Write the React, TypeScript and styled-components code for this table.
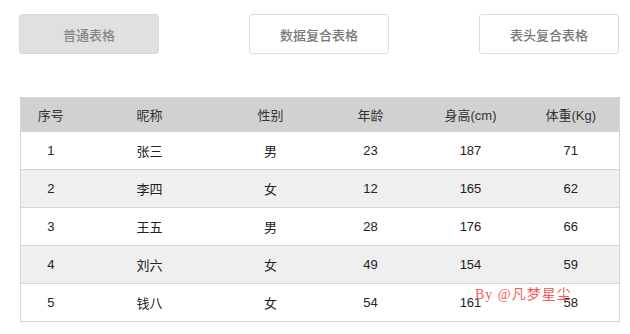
import React, { useState } from "react";
import styled, { createGlobalStyle } from "styled-components";

type Person = {
  id: number;
  name: string;
  sex: string;
  age: number;
  height: number;
  weight: number;
};

const people: Person[] = [
  { id: 1, name: "张三", sex: "男", age: 23, height: 187, weight: 71 },
  { id: 2, name: "李四", sex: "女", age: 12, height: 165, weight: 62 },
  { id: 3, name: "王五", sex: "男", age: 28, height: 176, weight: 66 },
  { id: 4, name: "刘六", sex: "女", age: 49, height: 154, weight: 59 },
  { id: 5, name: "钱八", sex: "女", age: 54, height: 161, weight: 58 },
];

const columns = [
  { title: "序号", width: 60 },
  { title: "昵称", width: 138 },
  { title: "性别", width: 104 },
  { title: "年龄", width: 96 },
  { title: "身高(cm)", width: 104 },
  { title: "体重(Kg)", width: 97 },
];

const tabs = ["普通表格", "数据复合表格", "表头复合表格"];

export default function App() {
  const [active, setActive] = useState(0);

  return (
    <>
      <GlobalStyle />
      <Page>
        <TabBar>
          {tabs.map((t, i) => (
            <TabButton key={t} $active={i === active} onClick={() => setActive(i)}>
              {t}
            </TabButton>
          ))}
        </TabBar>

        <TableWrap>
          <Table>
            <colgroup>
              {columns.map((c) => (
                <col key={c.title} style={{ width: c.width }} />
              ))}
            </colgroup>
            <thead>
              <tr>
                {columns.map((c) => (
                  <HeadCell key={c.title}>{c.title}</HeadCell>
                ))}
              </tr>
            </thead>
            <tbody>
              {people.map((p, i) => (
                <Row key={p.id} $odd={i % 2 === 1}>
                  <Cell>{p.id}</Cell>
                  <Cell>{p.name}</Cell>
                  <Cell>{p.sex}</Cell>
                  <Cell>{p.age}</Cell>
                  <Cell>{p.height}</Cell>
                  <Cell>{p.weight}</Cell>
                </Row>
              ))}
            </tbody>
          </Table>
          {/* 水印 */}
          <Watermark>By @凡梦星尘</Watermark>
        </TableWrap>
      </Page>
    </>
  );
}

const GlobalStyle = createGlobalStyle`
  body {
    margin: 0;
    background: #fff;
    font-family: "Liberation Sans", Arial, "Noto Sans CJK SC", sans-serif;
  }
`;

const Page = styled.div`
  width: 630px;
  padding: 14px 0 0 19px;
  box-sizing: border-box;
`;

const TabBar = styled.div`
  display: flex;
  gap: 90px;
`;

const TabButton = styled.button<{ $active: boolean }>`
  width: 140px;
  height: 40px;
  border: 1px solid ${(p) => (p.$active ? "#d8d8d8" : "#dcdcdc")};
  border-radius: 3px;
  background: ${(p) => (p.$active ? "#e0e0e0" : "#fff")};
  color: ${(p) => (p.$active ? "#888" : "#7a7a7a")};
  font-family: "Noto Sans CJK SC", sans-serif;
  font-size: 13px;
  font-weight: 500;
  cursor: pointer;
  padding: 0;
`;

const TableWrap = styled.div`
  position: relative;
  margin: 43px 0 0 1px;
  width: 600px;
`;

const Table = styled.table`
  width: 600px;
  table-layout: fixed;
  border-collapse: collapse;
  border: 1px solid #d6d6d6;
  border-top: none;
  font-size: 13px;
  color: #222;
`;

const HeadCell = styled.th`
  height: 35px;
  padding: 0;
  background: #d1d1d1;
  font-weight: normal;
  color: #333;
`;

const Row = styled.tr<{ $odd: boolean }>`
  background: ${(p) => (p.$odd ? "#efefef" : "#fff")};
  border-bottom: 1px solid #d6d6d6;
`;

const Cell = styled.td`
  height: 37px;
  padding: 0;
  text-align: center;
`;

const Watermark = styled.div`
  position: absolute;
  left: 455px;
  top: 186px;
  color: #f45a5a;
  font-family: "Liberation Serif", "Noto Sans CJK SC", serif;
  font-size: 14px;
  letter-spacing: 1px;
  pointer-events: none;
`;
